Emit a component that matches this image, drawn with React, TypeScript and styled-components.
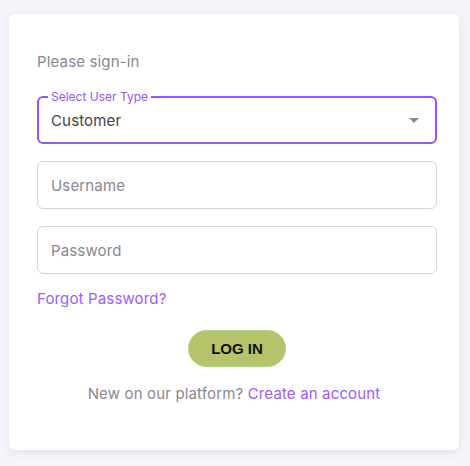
import React from "react";
import styled, { createGlobalStyle } from "styled-components";

const GlobalStyle = createGlobalStyle`
  html, body {
    margin: 0;
    padding: 0;
    background: #f4f5fa;
    font-family: Inter, "Noto Sans", sans-serif;
    letter-spacing: 0.15px;
  }
`;

const Page = styled.div`
  padding: 14px 11px 16px 9px;
  box-sizing: border-box;
  width: 470px;
  height: 466px;
`;

const Card = styled.div`
  width: 450px;
  height: 436px;
  background: #ffffff;
  border-radius: 6px;
  box-shadow: 0 2px 10px rgba(58, 53, 65, 0.1);
  box-sizing: border-box;
  padding: 37px 22px 0 28px;
  display: flex;
  flex-direction: column;
`;

const Heading = styled.div`
  font-size: 15px;
  line-height: 22px;
  color: #8a8790;
  margin-bottom: 23px;
`;

const SelectBox = styled.div`
  position: relative;
  height: 48px;
  border: 2px solid #9155fd;
  border-radius: 6px;
  box-sizing: border-box;
  display: flex;
  align-items: center;
  justify-content: space-between;
  padding: 0 16px 0 12px;
  margin-bottom: 17px;
`;

const FloatingLabel = styled.span`
  position: absolute;
  left: 9px;
  top: -9px;
  padding: 0 3px;
  background: #ffffff;
  font-size: 12px;
  line-height: 15px;
  letter-spacing: 0;
  color: #9155fd;
`;

const SelectValue = styled.span`
  font-size: 15px;
  color: #45414b;
`;

const Arrow = styled.span`
  width: 0;
  height: 0;
  border-left: 5px solid transparent;
  border-right: 5px solid transparent;
  border-top: 5px solid #8a8790;
`;

const Field = styled.input`
  height: 48px;
  border: 1px solid #d5d3d8;
  border-radius: 6px;
  box-sizing: border-box;
  padding: 0 13px;
  font-family: Inter, "Noto Sans", sans-serif;
  font-size: 15px;
  letter-spacing: 0.15px;
  color: #45414b;
  margin-bottom: 17px;
  outline: none;
  &::placeholder {
    color: #8a8790;
  }
`;

const LinkText = styled.a`
  color: #9c5cf9;
  text-decoration: none;
  cursor: pointer;
`;

const Forgot = styled.div`
  font-size: 15px;
  line-height: 22px;
  margin-top: -3px;
`;

const ButtonRow = styled.div`
  display: flex;
  justify-content: center;
  margin-top: 20px;
`;

const LoginButton = styled.button`
  width: 98px;
  height: 37px;
  border-radius: 19px;
  border: 1px solid #a9d97c;
  background: #b6c36a;
  color: #111111;
  font-family: "Liberation Sans", Arial, sans-serif;
  font-size: 15px;
  font-weight: 700;
  letter-spacing: 0;
  cursor: pointer;
`;

const Footer = styled.div`
  margin: 16px 6px 0 0;
  text-align: center;
  font-size: 15px;
  line-height: 22px;
  color: #8a8790;
`;

export default function App() {
  return (
    <>
      <GlobalStyle />
      <Page>
        <Card>
          <Heading>Please sign-in</Heading>
          <SelectBox>
            <FloatingLabel>Select User Type</FloatingLabel>
            <SelectValue>Customer</SelectValue>
            <Arrow />
          </SelectBox>
          <Field placeholder="Username" />
          <Field placeholder="Password" type="password" />
          <Forgot>
            <LinkText>Forgot Password?</LinkText>
          </Forgot>
          <ButtonRow>
            <LoginButton>LOG IN</LoginButton>
          </ButtonRow>
          <Footer>
            New on our platform? <LinkText>Create an account</LinkText>
          </Footer>
        </Card>
      </Page>
    </>
  );
}
